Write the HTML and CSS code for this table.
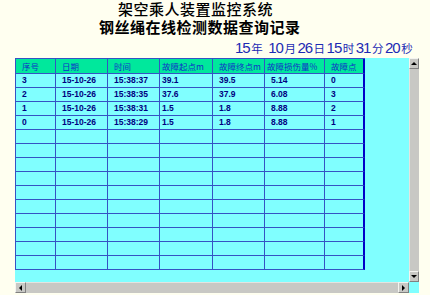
FILE: index.html
```html
<!DOCTYPE html>
<html>
<head>
<meta charset="utf-8">
<link rel="stylesheet" href="styles.css">
</head>
<body>
<div class="page">
  <div class="title t1">架空乘人装置监控系统</div>
  <div class="title t2">钢丝绳在线检测数据查询记录</div>
  <div class="clock"><span class="n">15</span><span class="c">年</span><span class="sp"></span><span class="n">10</span><span class="c">月</span><span class="n">26</span><span class="c">日</span><span class="n">15</span><span class="c">时</span><span class="n">31</span><span class="c">分</span><span class="n">20</span><span class="c">秒</span></div>
  <div class="panel">
    <div class="view">
      <div class="grid">
        <div class="cell head">序号</div><div class="cell head">日期</div><div class="cell head">时间</div><div class="cell head tight">故障起点m</div><div class="cell head">故障终点m</div><div class="cell head tight">故障损伤量%</div><div class="cell head last">故障点</div>
        <div class="cell">3</div><div class="cell">15-10-26</div><div class="cell">15:38:37</div><div class="cell tight">39.1</div><div class="cell">39.5</div><div class="cell">5.14</div><div class="cell last">0</div>
        <div class="cell">2</div><div class="cell">15-10-26</div><div class="cell">15:38:35</div><div class="cell tight">37.6</div><div class="cell">37.9</div><div class="cell">6.08</div><div class="cell last">3</div>
        <div class="cell">1</div><div class="cell">15-10-26</div><div class="cell">15:38:31</div><div class="cell tight">1.5</div><div class="cell">1.8</div><div class="cell">8.88</div><div class="cell last">2</div>
        <div class="cell">0</div><div class="cell">15-10-26</div><div class="cell">15:38:29</div><div class="cell tight">1.5</div><div class="cell">1.8</div><div class="cell">8.88</div><div class="cell last">1</div>
        <div class="cell"></div><div class="cell"></div><div class="cell"></div><div class="cell"></div><div class="cell"></div><div class="cell"></div><div class="cell last"></div>
        <div class="cell"></div><div class="cell"></div><div class="cell"></div><div class="cell"></div><div class="cell"></div><div class="cell"></div><div class="cell last"></div>
        <div class="cell"></div><div class="cell"></div><div class="cell"></div><div class="cell"></div><div class="cell"></div><div class="cell"></div><div class="cell last"></div>
        <div class="cell"></div><div class="cell"></div><div class="cell"></div><div class="cell"></div><div class="cell"></div><div class="cell"></div><div class="cell last"></div>
        <div class="cell"></div><div class="cell"></div><div class="cell"></div><div class="cell"></div><div class="cell"></div><div class="cell"></div><div class="cell last"></div>
        <div class="cell"></div><div class="cell"></div><div class="cell"></div><div class="cell"></div><div class="cell"></div><div class="cell"></div><div class="cell last"></div>
        <div class="cell"></div><div class="cell"></div><div class="cell"></div><div class="cell"></div><div class="cell"></div><div class="cell"></div><div class="cell last"></div>
        <div class="cell"></div><div class="cell"></div><div class="cell"></div><div class="cell"></div><div class="cell"></div><div class="cell"></div><div class="cell last"></div>
        <div class="cell"></div><div class="cell"></div><div class="cell"></div><div class="cell"></div><div class="cell"></div><div class="cell"></div><div class="cell last"></div>
        <div class="cell"></div><div class="cell"></div><div class="cell"></div><div class="cell"></div><div class="cell"></div><div class="cell"></div><div class="cell last"></div>
      </div>
    </div>
    <div class="vscroll">
      <div class="btn"><span class="tri up"></span></div>
      <div class="track"></div>
      <div class="btn"><span class="tri down"></span></div>
    </div>
    <div class="hscroll">
      <div class="btn"><span class="tri left"></span></div>
      <div class="track"></div>
      <div class="btn"><span class="tri right"></span></div>
    </div>
    <div class="corner"></div>
  </div>
</div>
</body>
</html>
```
FILE: styles.css
```css
html, body {
  margin: 0;
  padding: 0;
  background: #fffff0;
}
.page {
  width: 430px;
  height: 295px;
  overflow: hidden;
  background: #fffff0;
  font-family: "Noto Sans CJK SC", "Liberation Sans", sans-serif;
}
.title {
  color: #000;
  font-size: 15px;
  letter-spacing: 0.5px;
  line-height: 18px;
  height: 18px;
  white-space: nowrap;
}
.t1 {
  padding-left: 118px;
  font-weight: 500;
}
.t2 {
  padding-left: 99px;
  font-weight: 700;
}
.clock {
  margin-top: 2px;
  height: 20px;
  line-height: 20px;
  display: flex;
  align-items: baseline;
  padding-left: 235px;
  color: #1c2ab4;
  white-space: nowrap;
}
.clock .n {
  font-family: "Liberation Sans", sans-serif;
  font-size: 15px;
  letter-spacing: -1px;
  margin-right: 1.5px;
}
.clock .c {
  font-size: 11.5px;
  margin-right: 1.5px;
}
.clock .sp {
  width: 4px;
}
.panel {
  margin-left: 15px;
  width: 404px;
  display: grid;
  grid-template-columns: 394px 10px;
  grid-template-rows: 224px 11px;
  background: #80ffff;
}
.view {
  background: #80ffff;
  overflow: hidden;
}
.grid {
  display: grid;
  grid-template-columns: 40px 52px 52px 53px 52px 60px 40px;
  grid-template-rows: 15px;
  grid-auto-rows: 14px;
  width: 349px;
  border-left: 1px solid #3553c4;
  border-top: 1px solid #3553c4;
}
.cell {
  box-sizing: border-box;
  border-right: 1px solid #3553c4;
  border-bottom: 1px solid #3553c4;
  padding-left: 6px;
  font-family: "Liberation Sans", sans-serif;
  font-size: 8.5px;
  font-weight: 700;
  color: #000080;
  line-height: 13px;
  white-space: nowrap;
  overflow: hidden;
}
.cell.tight {
  padding-left: 2px;
}
.cell.last {
  border-right: 2px solid #0000c8;
}
.cell.head {
  background: #00e89c;
  color: #1030c8;
  font-family: "Noto Sans CJK SC", sans-serif;
  font-size: 8.5px;
  font-weight: 400;
  line-height: 14px;
}
.vscroll {
  display: flex;
  flex-direction: column;
  background: #c8c8c4;
}
.vscroll .track {
  flex: 1;
  background: #c8c8c4;
  border-left: 1px solid #e4e4e0;
}
.hscroll {
  display: flex;
  background: #c8c8c4;
}
.hscroll .track {
  flex: 1;
  background: #c8c8c4;
  border-top: 1px solid #e4e4e0;
}
.btn {
  box-sizing: border-box;
  width: 10px;
  height: 11px;
  background: #c8c8c4;
  border-top: 1px solid #f4f4f0;
  border-left: 1px solid #f4f4f0;
  border-right: 1px solid #808080;
  border-bottom: 1px solid #808080;
  display: flex;
  align-items: center;
  justify-content: center;
}
.hscroll .btn {
  width: 11px;
}
.tri {
  width: 0;
  height: 0;
}
.tri.up {
  border-left: 3px solid transparent;
  border-right: 3px solid transparent;
  border-bottom: 3px solid #000;
}
.tri.down {
  border-left: 3px solid transparent;
  border-right: 3px solid transparent;
  border-top: 3px solid #000;
}
.tri.left {
  border-top: 3px solid transparent;
  border-bottom: 3px solid transparent;
  border-right: 3px solid #000;
}
.tri.right {
  border-top: 3px solid transparent;
  border-bottom: 3px solid transparent;
  border-left: 3px solid #000;
}
.corner {
  background: #80ffff;
}
```
